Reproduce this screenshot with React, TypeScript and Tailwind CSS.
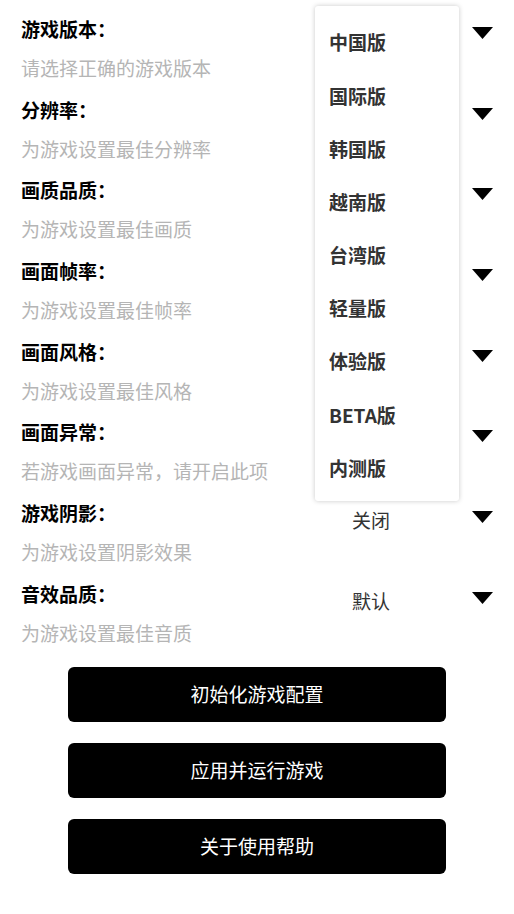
const font = "font-['Microsoft_YaHei','Noto_Sans_CJK_SC',sans-serif]";

interface Setting {
    label: string
    desc: string
    value: string
}

const settings: Setting[] = [
    { label: "游戏版本：", desc: "请选择正确的游戏版本", value: "中国版" },
    { label: "分辨率：", desc: "为游戏设置最佳分辨率", value: "1080P" },
    { label: "画质品质：", desc: "为游戏设置最佳画质", value: "高清" },
    { label: "画面帧率：", desc: "为游戏设置最佳帧率", value: "60帧" },
    { label: "画面风格：", desc: "为游戏设置最佳风格", value: "默认" },
    { label: "画面异常：", desc: "若游戏画面异常，请开启此项", value: "关闭" },
    { label: "游戏阴影：", desc: "为游戏设置阴影效果", value: "关闭" },
    { label: "音效品质：", desc: "为游戏设置最佳音质", value: "默认" },
];

const versions = ["中国版", "国际版", "韩国版", "越南版", "台湾版", "轻量版", "体验版", "BETA版", "内测版"];

function Triangle() {
    return (
        <svg width="21" height="12" viewBox="0 0 21 12" className="mt-[18px] shrink-0">
            <path d="M0 0 L21 0 L10.5 12 Z" fill="#000" />
        </svg>
    );
}

export default function App() {
    return (
        <div className={`relative w-[514px] h-[914px] bg-white ${font}`}>
            <div className="flex flex-col px-[21px] pt-[9px]">
                {settings.map((s, i) => (
                    <div key={i} className="flex h-[80.7px]">
                        <div className="flex-1 flex flex-col">
                            <p className="h-[40px] leading-[40px] text-[19px] font-bold text-black">{s.label}</p>
                            <p className="h-[38px] leading-[38px] text-[19px] text-[#b5b5b5]">{s.desc}</p>
                        </div>
                        <div className="w-[141px] flex justify-between">
                            {/* values under the open dropdown are hidden */}
                            <span className="mt-[15px] h-[24px] leading-[24px] text-[19px] text-[#333]">
                                {i < 6 ? "" : s.value}
                            </span>
                            <Triangle />
                        </div>
                    </div>
                ))}
            </div>

            <div className="flex flex-col items-center gap-[21px] mt-[12px]">
                {["初始化游戏配置", "应用并运行游戏", "关于使用帮助"].map((t) => (
                    <button key={t} className="w-[378px] h-[55px] rounded-[6px] bg-black text-white text-[19px]">
                        {t}
                    </button>
                ))}
            </div>

            {/* version dropdown, open */}
            <div className="absolute left-[315px] top-[6px] w-[144px] h-[495px] bg-white rounded-[3px] shadow-[0_0_5px_rgba(0,0,0,0.22)] py-[10px]">
                {versions.map((v) => (
                    <div key={v} className="h-[53.2px] flex items-center pl-[14px] text-[19px] font-bold text-[#333]">
                        {v}
                    </div>
                ))}
            </div>
        </div>
    );
}
